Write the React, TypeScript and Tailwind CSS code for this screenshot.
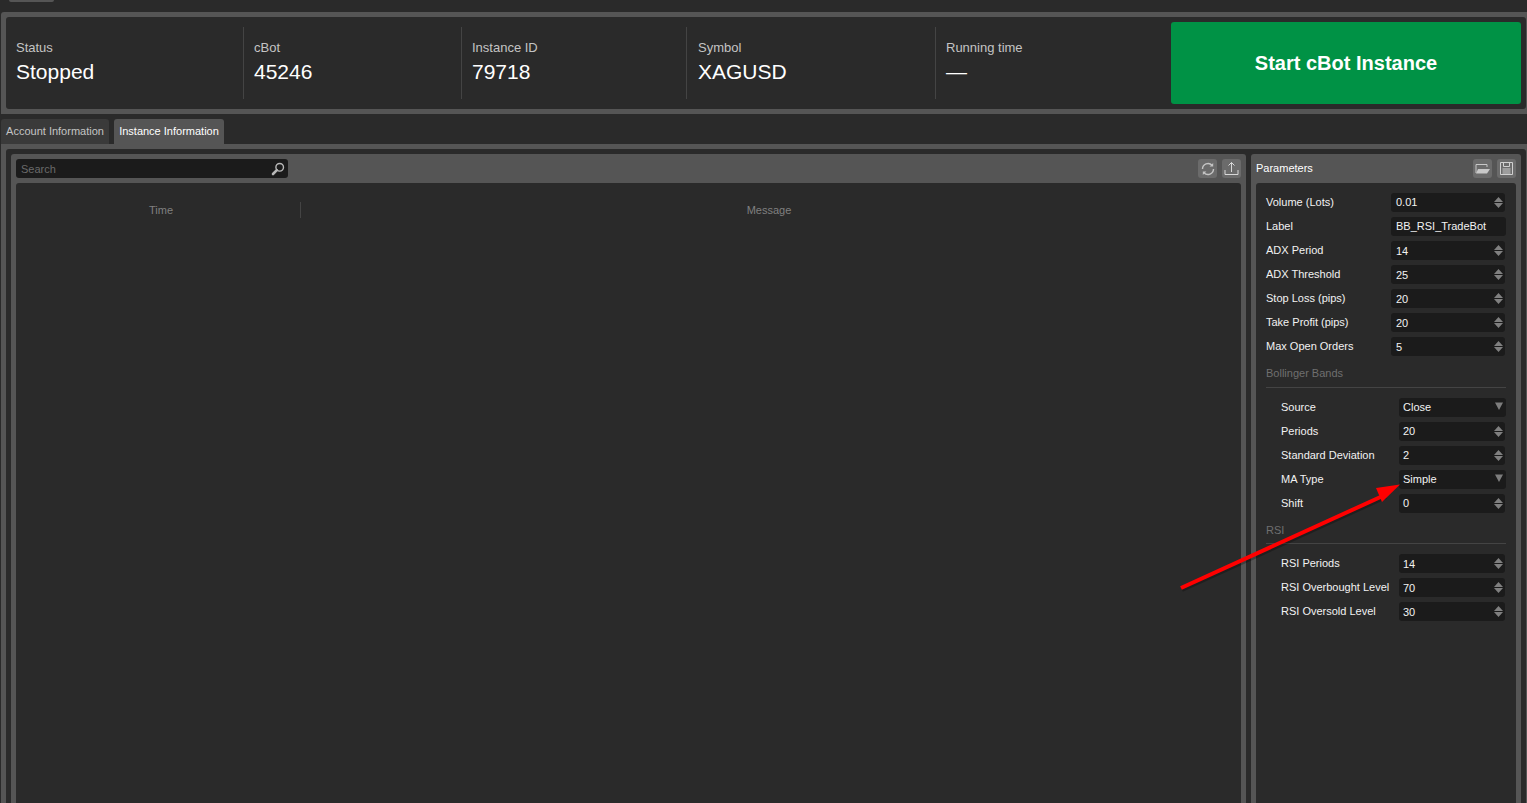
const font = "font-['Liberation_Sans',Arial,sans-serif]";

const stats = [
    { label: 'Status', value: 'Stopped', width: 'w-[238px]', pad: 'pl-[10px]' },
    { label: 'cBot', value: '45246', width: 'w-[218px]', pad: 'pl-[10px]' },
    { label: 'Instance ID', value: '79718', width: 'w-[225px]', pad: 'pl-[10px]' },
    { label: 'Symbol', value: 'XAGUSD', width: 'w-[249px]', pad: 'pl-[11px]' },
    { label: 'Running time', value: '—', width: 'w-[225px]', pad: 'pl-[10px]' },
];

type Row = { label: string; value: string; kind?: 'number' | 'text' | 'select'; low?: boolean };

const mainParams: Row[] = [
    { label: 'Volume (Lots)', value: '0.01' },
    { label: 'Label', value: 'BB_RSI_TradeBot', kind: 'text' },
    { label: 'ADX Period', value: '14', low: true },
    { label: 'ADX Threshold', value: '25', low: true },
    { label: 'Stop Loss (pips)', value: '20', low: true },
    { label: 'Take Profit (pips)', value: '20', low: true },
    { label: 'Max Open Orders', value: '5', low: true },
];

const bollinger: Row[] = [
    { label: 'Source', value: 'Close', kind: 'select' },
    { label: 'Periods', value: '20' },
    { label: 'Standard Deviation', value: '2' },
    { label: 'MA Type', value: 'Simple', kind: 'select' },
    { label: 'Shift', value: '0' },
];

const rsi: Row[] = [
    { label: 'RSI Periods', value: '14', low: true },
    { label: 'RSI Overbought Level', value: '70', low: true },
    { label: 'RSI Oversold Level', value: '30', low: true },
];

function Stepper() {
    return (
        <svg width="9" height="11" viewBox="0 0 9 11" className="shrink-0 fill-[#808080]">
            <path d="M4.5 0 L9 5 H0 Z" />
            <path d="M0 6 H9 L4.5 11 Z" />
        </svg>
    );
}

function Field({ row, nested }: { row: Row; nested?: boolean }) {
    const kind = row.kind ?? 'number';
    const left = nested ? 'w-[133px] pl-[15px]' : 'w-[125px]';
    const boxWidth = kind === 'number' ? (nested ? 'w-[106px]' : 'w-[114px]') : nested ? 'w-[107px]' : 'w-[115px]';
    const boxPad = kind === 'select' ? 'pl-[4px] pr-[3px]' : nested ? 'pl-[4px] pr-[2px]' : 'pl-[5px] pr-[2px]';

    return (
        <div className="flex h-[19px] items-center text-[11px] text-[#f2f2f2]">
            <div className={`${left} shrink-0 whitespace-nowrap`}>{row.label}</div>
            <div className={`flex h-[19px] items-center justify-between rounded-[3px] bg-[#1b1b1b] ${boxWidth} ${boxPad}`}>
                <span className={`whitespace-nowrap ${row.low ? 'pt-[1px]' : ''}`}>{row.value}</span>
                {kind === 'number' && <Stepper />}
                {kind === 'select' && (
                    <svg width="8" height="8" viewBox="0 0 8 8" className="mb-[3px] fill-[#7d7d7d]">
                        <path d="M0 0.5 H8 L4 8 Z" />
                    </svg>
                )}
            </div>
        </div>
    );
}

function IconButton({ children }: { children: React.ReactNode }) {
    return <button className="flex h-[19px] w-[19px] items-center justify-center rounded-[3px] bg-[#6b6b6b]">{children}</button>;
}

export default function App() {
    return (
        <div className={`${font} relative flex h-[803px] w-[1527px] flex-col overflow-hidden bg-[#2a2a2a]`}>
            <div className="h-[12px] shrink-0 pl-[9px]">
                <div className="h-[2px] w-[45px] rounded-b-[2px] bg-[#555555]" />
            </div>

            <div className="ml-[1px] shrink-0 rounded-tl-[3px] bg-[#555555] py-[5px] pl-[5px] pr-[1px]">
                <div className="flex h-[92px] items-center justify-between rounded-[3px] bg-[#2a2a2a] pr-[5px]">
                    <div className="flex h-[72px] items-stretch">
                        {stats.map((stat, index) => (
                            <div
                                key={stat.label}
                                className={`${stat.width} ${stat.pad} flex flex-col ${index < 4 ? 'border-r border-[#444444]' : ''}`}
                            >
                                <div className="mt-[13px] text-[13px] leading-[16px] text-[#c4c4c4]">{stat.label}</div>
                                <div className="mt-[4px] text-[21px] leading-[24px] text-white">{stat.value}</div>
                            </div>
                        ))}
                    </div>
                    <button className="flex h-[82px] w-[350px] items-center justify-center rounded-[3px] bg-[#009245] text-[20px] font-bold text-white">
                        Start cBot Instance
                    </button>
                </div>
            </div>

            <div className="mt-[5px] flex h-[25px] shrink-0 items-stretch gap-[5px] pl-[1px] text-[11px]">
                <div className="flex w-[108px] items-center justify-center rounded-t-[3px] bg-[#3a3a3a] text-[#c4c4c4]">Account Information</div>
                <div className="flex w-[110px] items-center justify-center rounded-t-[3px] bg-[#555555] text-white">Instance Information</div>
            </div>

            <div className="ml-[1px] flex min-h-0 flex-1 flex-col bg-[#555555] pl-[5px] pr-[1px] pt-[5px]">
                <div className="flex min-h-0 flex-1 gap-[5px] rounded-t-[3px] bg-[#2a2a2a] px-[5px] pt-[5px]">
                    <div className="flex w-[1235px] flex-col rounded-t-[3px] bg-[#555555] px-[5px] pt-[5px]">
                        <div className="flex h-[19px] items-center justify-between">
                            <div className="flex h-[19px] w-[272px] items-center justify-between rounded-[3px] bg-[#1b1b1b] pl-[5px] pr-[3px]">
                                <span className="pt-[1px] text-[11px] text-[#6a6a6a]">Search</span>
                                <svg width="14" height="14" viewBox="0 0 14 14" fill="none">
                                    <circle cx="8.7" cy="5.3" r="3.8" stroke="#b8b8b8" strokeWidth="1.4" />
                                    <path d="M5.8 8.2 L2 12" stroke="#b8b8b8" strokeWidth="2.6" strokeLinecap="round" />
                                </svg>
                            </div>
                            <div className="flex gap-[5px]">
                                <IconButton>
                                    <svg width="14" height="14" viewBox="0 0 14 14" fill="none" stroke="#c4c4c4" strokeWidth="1.4">
                                        <path d="M1.5 7 A5.5 5.5 0 0 1 11 3.3" />
                                        <path d="M12.5 7 A5.5 5.5 0 0 1 3 10.7" />
                                        <path d="M12.2 1 V4.6 H8.6 Z" fill="#c4c4c4" stroke="none" />
                                        <path d="M1.8 13 V9.4 H5.4 Z" fill="#c4c4c4" stroke="none" />
                                    </svg>
                                </IconButton>
                                <IconButton>
                                    <svg width="15" height="15" viewBox="0 0 15 15" fill="none" stroke="#d8d8d8" strokeWidth="1">
                                        <path d="M1 9 V13.5 H14 V9" />
                                        <path d="M7.5 11 V1.5" />
                                        <path d="M4.5 4.5 L7.5 1.5 L10.5 4.5" />
                                    </svg>
                                </IconButton>
                            </div>
                        </div>
                        <div className="mt-[5px] flex-1 rounded-t-[3px] bg-[#2a2a2a]">
                            <div className="mt-[19px] flex h-[16px] items-center text-[11px] text-[#808080]">
                                <div className="flex h-[16px] w-[285px] items-center justify-center border-r border-[#444444] pl-[6px]">Time</div>
                                <div className="flex-1 pr-[4px] text-center">Message</div>
                            </div>
                        </div>
                    </div>

                    <div className="flex w-[270px] flex-col rounded-t-[3px] bg-[#555555] px-[5px] pt-[5px]">
                        <div className="flex h-[19px] items-center justify-between">
                            <span className="text-[11px] text-white">Parameters</span>
                            <div className="flex gap-[5px]">
                                <IconButton>
                                    <svg width="15" height="11" viewBox="0 0 15 11" fill="none">
                                        <path d="M1 10 V1.5 H12 V4" stroke="#c8c8c8" strokeWidth="1" />
                                        <path d="M1 10.5 L3 6 H15 L12 10.5 Z" fill="#c8c8c8" />
                                    </svg>
                                </IconButton>
                                <IconButton>
                                    <svg width="13" height="13" viewBox="0 0 13 13" fill="none" stroke="#d0d0d0" strokeWidth="1">
                                        <path d="M0.5 0.5 H12.5 V12.5 H0.5 Z" />
                                        <path d="M3.5 0.5 V4.5 H9.5 V0.5" />
                                        <path d="M2.5 7 H10.5 M2.5 9 H10.5 M2.5 11 H10.5" />
                                    </svg>
                                </IconButton>
                            </div>
                        </div>
                        <div className="mt-[5px] flex-1 rounded-t-[3px] bg-[#2a2a2a] pl-[10px] pr-[10px] pt-[10px]">
                            <div className="flex flex-col gap-[5px]">
                                {mainParams.map((row) => (
                                    <Field key={row.label} row={row} />
                                ))}
                            </div>
                            <div className="mt-[9px] flex h-[23px] items-center border-b border-[#444444] pb-[5px] text-[11px] text-[#6f6f6f]">Bollinger Bands</div>
                            <div className="mt-[10px] flex flex-col gap-[5px]">
                                {bollinger.map((row) => (
                                    <Field key={row.label} row={row} nested />
                                ))}
                            </div>
                            <div className="mt-[8px] flex h-[23px] items-center border-b border-[#444444] pb-[3px] text-[11px] text-[#6f6f6f]">RSI</div>
                            <div className="mt-[10px] flex flex-col gap-[5px]">
                                {rsi.map((row) => (
                                    <Field key={row.label} row={row} nested />
                                ))}
                            </div>
                        </div>
                    </div>
                </div>
            </div>

            {/* annotation arrow on top of the screenshot */}
            <svg className="pointer-events-none absolute left-0 top-0" width="1527" height="803" viewBox="0 0 1527 803">
                <path d="M1181 588 L1385 495" stroke="#000000" strokeOpacity="0.25" strokeWidth="4" transform="translate(1 2)" />
                <path d="M1181 588 L1386 494.5" stroke="#ff0000" strokeWidth="4" />
                <path d="M1400 484.5 L1376 488 L1382 502 Z" fill="#ff0000" />
            </svg>
        </div>
    );
}
